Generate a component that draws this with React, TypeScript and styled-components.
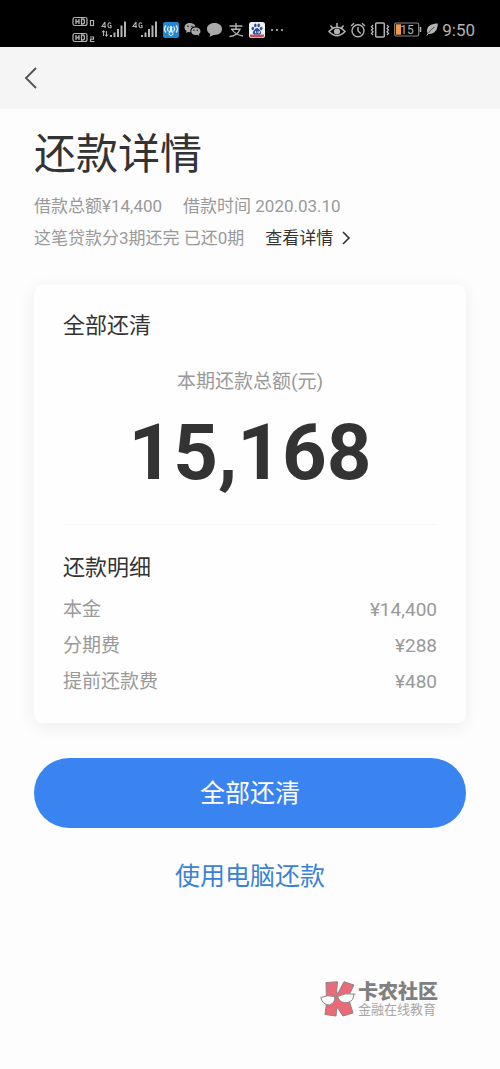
import React from "react";
import styled, { createGlobalStyle } from "styled-components";

const GlobalStyle = createGlobalStyle`
  *, *::before, *::after { box-sizing: border-box; }
  body {
    margin: 0;
    background: #fdfdfd;
    color: #333;
    font-family: Roboto, "Noto Sans CJK SC", sans-serif;
  }
  h1, h2, p, dl, dd { margin: 0; font-weight: 400; }
  svg { display: block; flex: none; }
`;

const StatusBar = styled.div`
  display: flex;
  justify-content: space-between;
  height: 47px;
  padding: 12px 25px 0 72px;
  background: #000;
  color: #b4b4b4;
`;

const StatusGroup = styled.div<{ $gap: number }>`
  display: flex;
  align-items: center;
  gap: ${(p) => p.$gap}px;
`;

const Clock = styled.time`
  font-size: 17px;
  line-height: 20px;
`;

const NavBar = styled.nav`
  display: flex;
  align-items: center;
  height: 62px;
  padding: 0 18px;
  background: #f5f5f5;
`;

const BackButton = styled.button`
  display: flex;
  padding: 6px;
  border: 0;
  background: none;
  color: #555;
  cursor: pointer;
`;

const Main = styled.main`
  display: flex;
  flex-direction: column;
  padding: 22px 34px 0;
`;

const Title = styled.h1`
  font-size: 42px;
  line-height: 48px;
  margin-bottom: 11px;
`;

const MetaLine = styled.p<{ $gap: number }>`
  display: flex;
  align-items: center;
  gap: ${(p) => p.$gap}px;
  color: #999;
  font-size: 17px;
  line-height: 32px;
  white-space: nowrap;
`;

const DetailLink = styled.a`
  display: flex;
  align-items: center;
  gap: 8px;
  color: #333;
  text-decoration: none;
`;

const Card = styled.section`
  margin-top: 31px;
  padding: 25px 29px 23px;
  border-radius: 8px;
  background: #fefefe;
  box-shadow: 0 3px 18px rgba(0, 0, 0, 0.07);
`;

const CardTitle = styled.h2`
  font-size: 22px;
  line-height: 32px;
`;

const Caption = styled.p`
  margin-top: 26px;
  color: #999;
  font-size: 19px;
  line-height: 28px;
  text-align: center;
`;

const Amount = styled.p`
  margin-top: 17px;
  font-size: 78px;
  font-weight: 700;
  line-height: 80px;
  text-align: center;
`;

const Divider = styled.hr`
  height: 1px;
  margin: 31px 0 27px;
  border: 0;
  background: #f7f7f7;
`;

const FeeList = styled.dl`
  margin-top: 8px;
  color: #999;
  font-size: 19px;
  line-height: 36px;
`;

const FeeRow = styled.div`
  display: flex;
  justify-content: space-between;
`;

const PayButton = styled.button`
  height: 70px;
  margin-top: 35px;
  padding: 0 0 4px;
  border: 0;
  border-radius: 35px;
  background: #3a84f2;
  color: #fff;
  font-family: inherit;
  font-size: 25px;
  cursor: pointer;
`;

const DesktopLink = styled.a`
  align-self: center;
  margin-top: 31px;
  color: #3a82d4;
  font-size: 25px;
  line-height: 36px;
  text-decoration: none;
`;

const Footer = styled.footer`
  display: flex;
  justify-content: flex-end;
  align-items: center;
  gap: 2px;
  padding: 86px 62px 32px 0;
`;

const BrandName = styled.p`
  color: #808080;
  font-size: 20px;
  font-weight: 900;
  line-height: 22px;
`;

const BrandLine = styled.p`
  color: #a5a5a5;
  font-size: 13px;
  line-height: 14px;
`;

const HdIcon = () => (
  <svg width="24" height="30" viewBox="0 0 24 30" fill="none" stroke="#b4b4b4" role="img" aria-label="HD 1 HD 2">
    {[5, 21].map((y, i) => (
      <g key={y}>
        <rect x="1" y={y - 2.5} width="14" height="8" rx="2" strokeWidth="1.200" />
        <path d={`M4 ${y - 1}v5M7 ${y - 1}v5M4 ${y + 1.5}h3M9.500 ${y - 1}v5h1q2 0 2-2.500t-2-2.500z`} strokeWidth="1.300" />
        <path d={i ? `M18 ${y + 1}h3.500v2.200h-3v2.300h4` : `M18.500 ${y + 0.5}h3v5h-3z`} strokeWidth="1.200" />
      </g>
    ))}
  </svg>
);

const SignalIcon = ({ data }: { data?: boolean }) => (
  <svg width="26" height="22" viewBox="0 0 26 22" fill="#b4b4b4" role="img" aria-label="4G">
    <path d="M4 3v6M4 3L1 7.500h4M10 4.500Q7 2.500 7 6t3 2.500V6.500H8.800" fill="none" stroke="#b4b4b4" strokeWidth="1.100" />
    {data && <path d="M2.500 12v5M1 13.500l1.500-2 1.500 2M5.500 12v5M4 15.500l1.500 2 1.500-2" fill="none" stroke="#b4b4b4" />}
    <path d="M9 16h2v2H9zM12.500 13.500h2V18h-2zM16 10h2v8h-2zM19.500 6.500h2V18h-2zM23 2.500h2V18h-2z" />
  </svg>
);

const HotspotIcon = () => (
  <svg width="16" height="16" viewBox="0 0 16 16" fill="none" stroke="#e4f5ff">
    <rect width="16" height="16" rx="2" fill="#2586d0" stroke="none" />
    <path d="M3 3.500Q0 7 3 10.500M5.500 4.500Q3.500 7 5.500 9.500M13 3.500Q16 7 13 10.500M10.500 4.500Q12.500 7 10.500 9.500M8 6L6.500 11M8 6l1.500 5" strokeWidth="1.200" />
    <circle cx="8" cy="5.500" r="1" fill="#e4f5ff" />
    <circle cx="8" cy="11.500" r="2" />
  </svg>
);

const WechatIcon = () => (
  <svg width="17" height="15" viewBox="0 0 17 15" fill="#a9a9a9">
    <path d="M6 1C2.700 1 .5 3 .5 5.600c0 1.500.8 2.700 2 3.500L2 11l2.300-1.100L6 10.200 6.500 9.500C6 6.500 8.500 4.500 11.500 4.600 11 2.400 8.800 1 6 1z" />
    <path d="M11.700 5.500C9 5.500 7.200 7.200 7.200 9.300S9 13 11.700 13l1.700-.2 2 1.200-.5-1.800c1-.7 1.600-1.700 1.600-2.900 0-2.100-2.100-3.800-4.800-3.800z" />
    <g fill="#111"><circle cx="4" cy="4.300" r=".8" /><circle cx="8" cy="4.300" r=".8" /><circle cx="10" cy="8.300" r=".7" /><circle cx="13.300" cy="8.300" r=".7" /></g>
  </svg>
);

const BubbleIcon = () => (
  <svg width="17" height="16" viewBox="0 0 17 16" fill="#a9a9a9">
    <path d="M8.500 1C4 1 1 3.500 1 7c0 2.200 1.200 4 3.200 5L3.500 15l4-2.100C13 13.300 16 10.500 16 7c0-3.500-3-6-7.500-6z" />
  </svg>
);

const AlipayIcon = () => (
  <svg width="16" height="16" viewBox="0 0 16 16" fill="none" stroke="#b4b4b4" strokeWidth="1.400">
    <path d="M1.500 4h13M8 1v6M3 7.200h9C10.500 11 7 14 1.500 14.500M4 7.500C6.500 11.500 10 13.500 15 14" />
  </svg>
);

const BaiduIcon = () => (
  <svg width="16" height="16" viewBox="0 0 16 16" fill="#2c4f9e">
    <rect width="16" height="16" rx="2.500" fill="#f0f1f5" />
    <path d="M1 12.500h14v1q0 2-2 2H3q-2 0-2-2z" fill="#c35258" />
    <ellipse cx="3.800" cy="6.500" rx="1.300" ry="1.800" />
    <ellipse cx="6.300" cy="3.400" rx="1.300" ry="1.800" />
    <ellipse cx="9.700" cy="3.400" rx="1.300" ry="1.800" />
    <ellipse cx="12.200" cy="6.500" rx="1.300" ry="1.800" />
    <path d="M8 6c-1.500 0-2.200 1.700-3.300 2.700C3 10.300 4 12.700 6 12.500h4c2 .2 3-2.200 1.300-3.800C10.200 7.700 9.500 6 8 6z" />
    <path d="M6.500 9v2h1M9 9v2h1.500V9" fill="none" stroke="#fff" strokeWidth=".7" />
  </svg>
);

const MoreIcon = () => (
  <svg width="14" height="4" viewBox="0 0 14 4" fill="#b4b4b4">
    <circle cx="2" cy="2" r="1.100" /><circle cx="7" cy="2" r="1.100" /><circle cx="12" cy="2" r="1.100" />
  </svg>
);

const EyeIcon = () => (
  <svg width="18" height="16" viewBox="0 0 18 16" fill="none" stroke="#b4b4b4" strokeWidth="1.500">
    <path d="M1 9.500Q9 1 17 9.500 9 18 1 9.500zM9 4.500V1M4.500 6L2.500 3.500M13.500 6l2-2.500" />
    <circle cx="9" cy="9.500" r="2.300" fill="#b4b4b4" />
  </svg>
);

const AlarmIcon = () => (
  <svg width="16" height="16" viewBox="0 0 16 16" fill="none" stroke="#b4b4b4" strokeWidth="1.400">
    <circle cx="8" cy="8.800" r="6" />
    <path d="M8 5v4l2.800 2.500M1 4l3-2.800M15 4l-3-2.800" />
  </svg>
);

const VibrateIcon = () => (
  <svg width="20" height="16" viewBox="0 0 20 16" fill="none" stroke="#b4b4b4">
    <rect x="5.700" y="1" width="8.600" height="14" rx="1" strokeWidth="1.500" />
    <path d="M3 3L1.500 4.700 3 6.400 1.500 8.100 3 9.800 1.500 11.500 3 13M17 3l1.500 1.700L17 6.400l1.500 1.700L17 9.800l1.500 1.700L17 13" strokeWidth="1.300" />
  </svg>
);

const BatteryIcon = () => (
  <svg width="28" height="15" viewBox="0 0 28 15" role="img" aria-label="15%">
    <rect x=".7" y="1" width="24" height="13" rx="1.500" fill="none" stroke="#8a8a8a" strokeWidth="1.200" />
    <rect x="2" y="2.300" width="5" height="10.400" fill="#f09a4d" />
    <path d="M26.500 5v5" stroke="#b4b4b4" strokeWidth="1.500" />
    <text x="13" y="11.700" textAnchor="middle" fontSize="12" fill="#b4b4b4">15</text>
  </svg>
);

const LeafIcon = () => (
  <svg width="12" height="13" viewBox="0 0 12 13">
    <path d="M11.800 .5C6 .5 1 3 1 7.500c0 1.500.3 2.300.9 3.300C8 11.500 11.800 7.500 11.800 .5z" fill="#b4b4b4" />
    <path d="M2.500 10Q4 7 8.500 4" fill="none" stroke="#333" strokeWidth=".8" />
    <path d="M.8 12.500l1.700-2.500" stroke="#b4b4b4" />
  </svg>
);

const BackIcon = () => (
  <svg width="14" height="24" viewBox="0 0 14 24" fill="none" stroke="currentColor" strokeWidth="1.900">
    <path d="M12 2L2 12l10 10" />
  </svg>
);

const ForwardIcon = () => (
  <svg width="10" height="14" viewBox="0 0 10 14" fill="none" stroke="currentColor" strokeWidth="1.600">
    <path d="M2 1l6 6-6 6" />
  </svg>
);

const BrandLogo = () => (
  <svg width="36" height="36" viewBox="0 0 36 36" stroke="#858585" strokeWidth="1" strokeLinejoin="round">
    <path d="M6 1.500L17.500 .8 16.500 12h1.500L24 .8 34 4l-6 12 5 16-10 3-6-9-1 9-11-1.500L6.500 22z" fill="#ec6a78" />
    <path d="M.8 16.500Q7 13.500 14.800 15.500q.6 6.500-5.300 8.500Q2.500 24 .8 16.500z" fill="#fdfdfd" />
    <path d="M17.500 15.500Q25 11.500 33.500 13q.8 6.500-5.500 8.500-8 1.500-10.500-6z" fill="#fdfdfd" />
    <path d="M14.800 16.500l2.700-1M33.500 13l2 .2" fill="none" />
  </svg>
);

const fees = [
  { name: "本金", value: "¥14,400" },
  { name: "分期费", value: "¥288" },
  { name: "提前还款费", value: "¥480" },
];

export default function App() {
  return (
    <>
      <GlobalStyle />
      <StatusBar>
        <StatusGroup $gap={5}>
          <HdIcon />
          <SignalIcon data />
          <SignalIcon />
          <HotspotIcon />
          <WechatIcon />
          <BubbleIcon />
          <AlipayIcon />
          <BaiduIcon />
          <MoreIcon />
        </StatusGroup>
        <StatusGroup $gap={4}>
          <EyeIcon />
          <AlarmIcon />
          <VibrateIcon />
          <BatteryIcon />
          <LeafIcon />
          <Clock>9:50</Clock>
        </StatusGroup>
      </StatusBar>
      <NavBar>
        <BackButton type="button" aria-label="返回">
          <BackIcon />
        </BackButton>
      </NavBar>
      <Main>
        <Title>还款详情</Title>
        <MetaLine $gap={21}>
          <span>借款总额¥14,400</span>
          <span>借款时间 2020.03.10</span>
        </MetaLine>
        <MetaLine $gap={21}>
          <span>这笔贷款分3期还完 已还0期</span>
          <DetailLink href="#details">
            查看详情
            <ForwardIcon />
          </DetailLink>
        </MetaLine>
        <Card>
          <CardTitle>全部还清</CardTitle>
          <Caption>本期还款总额(元)</Caption>
          <Amount>15,168</Amount>
          <Divider />
          <CardTitle>还款明细</CardTitle>
          <FeeList>
            {fees.map((fee) => (
              <FeeRow key={fee.name}>
                <dt>{fee.name}</dt>
                <dd>{fee.value}</dd>
              </FeeRow>
            ))}
          </FeeList>
        </Card>
        <PayButton type="button">全部还清</PayButton>
        <DesktopLink href="#desktop">使用电脑还款</DesktopLink>
      </Main>
      <Footer>
        <BrandLogo />
        <div>
          <BrandName>卡农社区</BrandName>
          <BrandLine>金融在线教育</BrandLine>
        </div>
      </Footer>
    </>
  );
}
